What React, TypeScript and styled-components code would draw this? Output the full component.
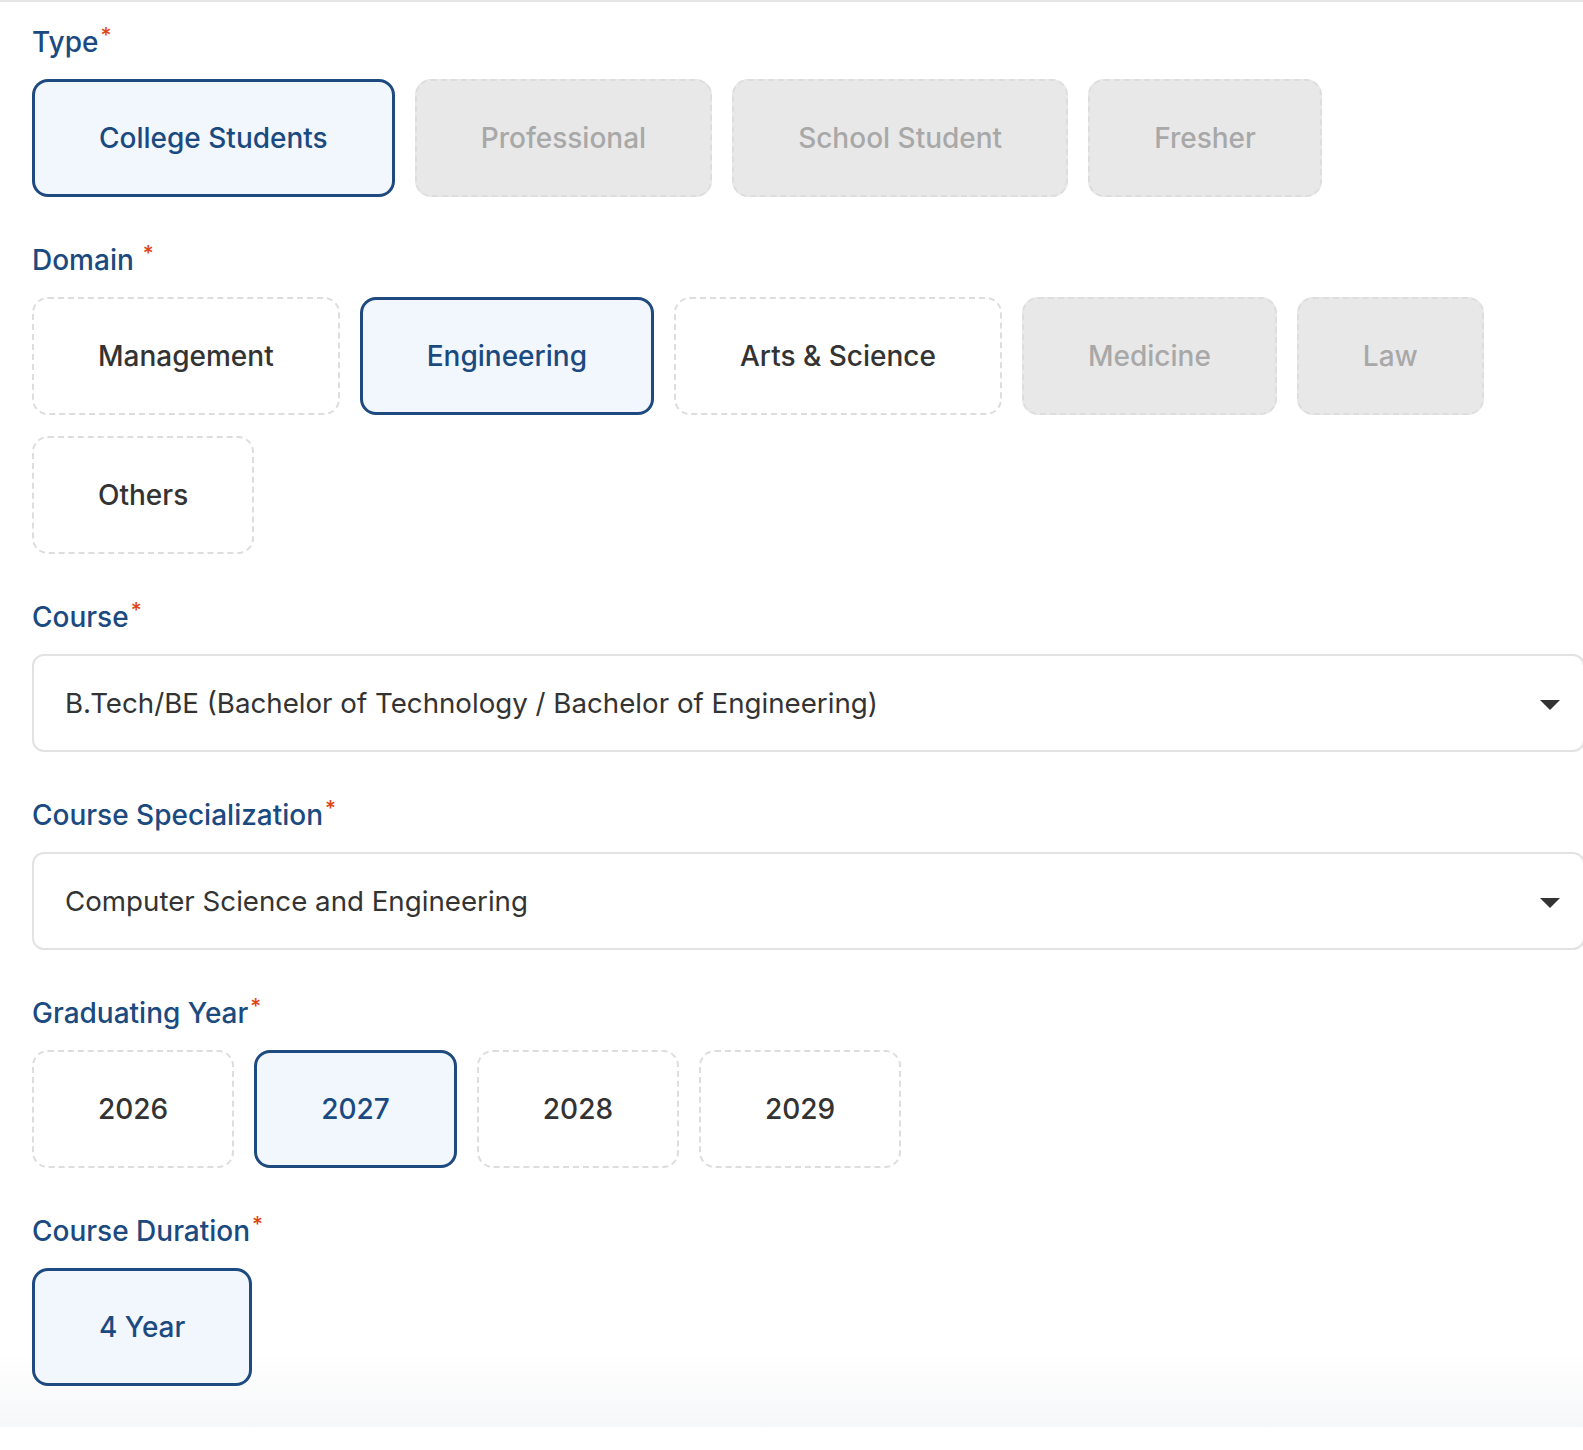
import React, { useState } from "react";
import styled, { createGlobalStyle } from "styled-components";

const GlobalStyle = createGlobalStyle`
  html, body {
    margin: 0;
    padding: 0;
    background: #ffffff;
    overflow-x: hidden;
  }
  * {
    box-sizing: border-box;
  }
`;

const Panel = styled.div`
  width: 1583px;
  border-top: 2px solid #e6e6e6;
  padding: 24px 0 41px 32px;
  background: linear-gradient(to bottom, #ffffff calc(100% - 75px), #f6f7f9 100%);
  font-family: Inter, "Noto Sans", sans-serif;
`;

const Section = styled.div`
  margin-bottom: 47px;

  &:last-child {
    margin-bottom: 0;
  }
`;

const Label = styled.div`
  height: 32px;
  line-height: 32px;
  margin-bottom: 21px;
  font-size: 28px;
  font-weight: 500;
  color: #1b4a80;
`;

const Star = styled.sup<{ $gap?: boolean }>`
  color: #e14412;
  font-size: 21px;
  line-height: 1;
  vertical-align: top;
  position: relative;
  top: -1px;
  margin-left: ${({ $gap }) => ($gap ? "9px" : "2px")};
`;

const Options = styled.div`
  display: flex;
  flex-wrap: wrap;
  gap: 21px 20px;
`;

type Variant = "selected" | "idle" | "disabled";

const Option = styled.button<{ $variant: Variant }>`
  height: 118px;
  padding: 0 64px;
  border-radius: 16px;
  font-family: Inter, "Noto Sans", sans-serif;
  font-size: 28px;
  font-weight: 500;
  cursor: ${({ $variant }) => ($variant === "disabled" ? "default" : "pointer")};
  border: ${({ $variant }) =>
    $variant === "selected" ? "3px solid #1e4a80" : "2px dashed #dddddd"};
  background: ${({ $variant }) =>
    $variant === "selected" ? "#f2f7fd" : $variant === "disabled" ? "#e8e8e8" : "#ffffff"};
  color: ${({ $variant }) =>
    $variant === "selected" ? "#1b4a80" : $variant === "disabled" ? "#a8a8a8" : "#333333"};
`;

const Select = styled.div`
  width: 1553px;
  height: 98px;
  border: 2px solid #e2e2e2;
  border-radius: 12px;
  display: flex;
  align-items: center;
  justify-content: space-between;
  padding: 0 23px 0 31px;
  font-size: 27.7px;
  color: #333333;
  background: #ffffff;
`;

const Caret = styled.svg`
  width: 20px;
  height: 10px;
  flex-shrink: 0;
  margin-top: 4px;
`;

type Opt = { label: string; disabled?: boolean };

const Choice = ({
  items,
  value,
  onPick,
}: {
  items: Opt[];
  value: string;
  onPick: (v: string) => void;
}) => (
  <Options>
    {items.map((it) => (
      <Option
        key={it.label}
        $variant={it.disabled ? "disabled" : it.label === value ? "selected" : "idle"}
        onClick={() => !it.disabled && onPick(it.label)}
      >
        {it.label}
      </Option>
    ))}
  </Options>
);

const Dropdown = ({ value }: { value: string }) => (
  <Select>
    <span>{value}</span>
    <Caret viewBox="0 0 20 10">
      <path d="M0 0 L20 0 L10 10 Z" fill="#333333" />
    </Caret>
  </Select>
);

export default function App() {
  const [type, setType] = useState("College Students");
  const [domain, setDomain] = useState("Engineering");
  const [year, setYear] = useState("2027");
  const [duration, setDuration] = useState("4 Year");

  return (
    <>
      <GlobalStyle />
      <Panel>
        <Section>
          <Label>
            Type<Star>*</Star>
          </Label>
          <Choice
            value={type}
            onPick={setType}
            items={[
              { label: "College Students" },
              { label: "Professional", disabled: true },
              { label: "School Student", disabled: true },
              { label: "Fresher", disabled: true },
            ]}
          />
        </Section>
        <Section>
          <Label>
            Domain<Star $gap>*</Star>
          </Label>
          <Choice
            value={domain}
            onPick={setDomain}
            items={[
              { label: "Management" },
              { label: "Engineering" },
              { label: "Arts & Science" },
              { label: "Medicine", disabled: true },
              { label: "Law", disabled: true },
              { label: "Others" },
            ]}
          />
        </Section>
        <Section>
          <Label>
            Course<Star>*</Star>
          </Label>
          <Dropdown value="B.Tech/BE (Bachelor of Technology / Bachelor of Engineering)" />
        </Section>
        <Section>
          <Label>
            Course Specialization<Star>*</Star>
          </Label>
          <Dropdown value="Computer Science and Engineering" />
        </Section>
        <Section>
          <Label>
            Graduating Year<Star>*</Star>
          </Label>
          <Choice
            value={year}
            onPick={setYear}
            items={[{ label: "2026" }, { label: "2027" }, { label: "2028" }, { label: "2029" }]}
          />
        </Section>
        <Section>
          <Label>
            Course Duration<Star>*</Star>
          </Label>
          <Choice value={duration} onPick={setDuration} items={[{ label: "4 Year" }]} />
        </Section>
      </Panel>
    </>
  );
}
